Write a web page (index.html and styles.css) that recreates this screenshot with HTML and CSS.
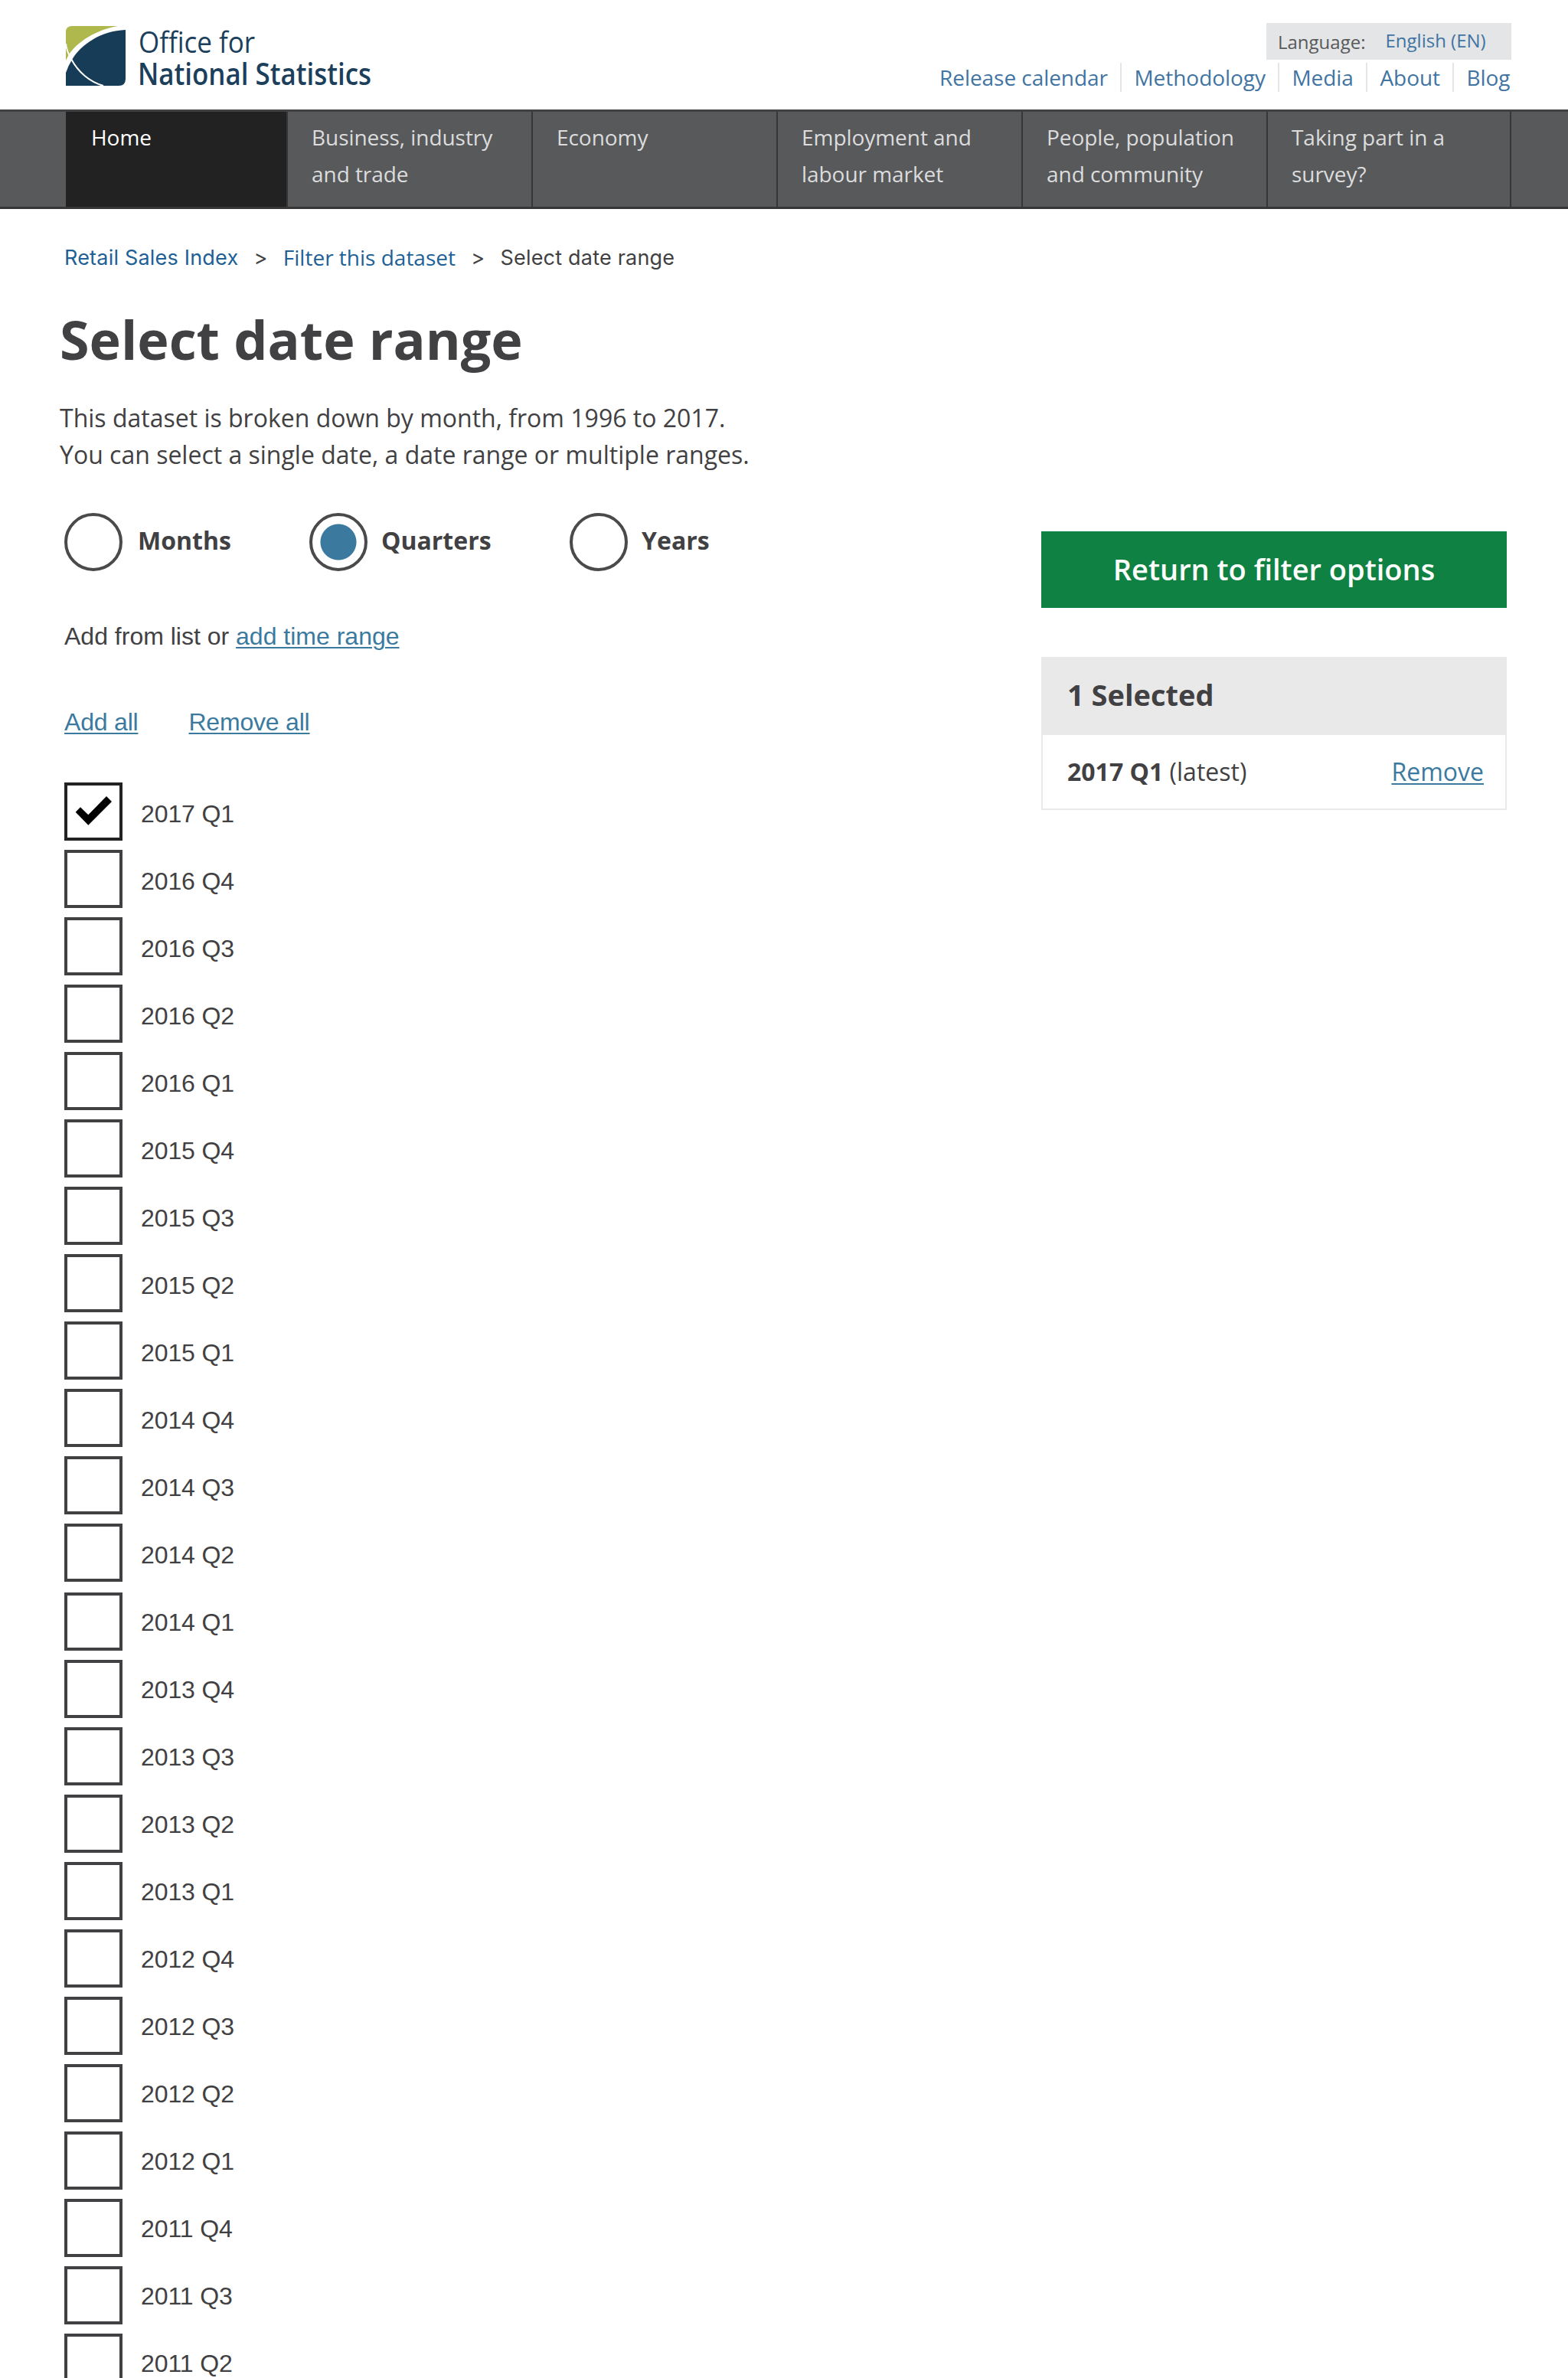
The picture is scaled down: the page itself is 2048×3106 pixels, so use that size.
FILE: index.html
```html
<!DOCTYPE html>
<html lang="en">
<head>
<meta charset="utf-8">
<title>Select date range</title>
<link rel="stylesheet" href="styles.css">
</head>
<body>
<header class="header">
  <svg class="logo" width="404" height="90" viewBox="0 0 404 90" role="img">
    <path class="logo-green" d="M8 0H68C40 5 17 19 4 37L0 45V8Q0 0 8 0Z"/>
    <path class="logo-navy" d="M0 78V61Q3 52 8 44C20 24 46 6 78 5V69Q78 78 69 78H0Z"/>
    <path class="logo-arc" d="M0 23Q1 33 7 43C16 60 31 73 49 78"/>
    <text class="logo-office" x="95" y="35" textLength="152" lengthAdjust="spacingAndGlyphs">Office for</text>
    <text class="logo-stats" x="94" y="77" textLength="305" lengthAdjust="spacingAndGlyphs">National Statistics</text>
  </svg>
  <div class="header-side">
    <div class="language"><span>Language:</span><a class="language-link">English (EN)</a></div>
    <nav class="links">
      <a>Release calendar</a><a>Methodology</a><a>Media</a><a>About</a><a>Blog</a>
    </nav>
  </div>
</header>
<nav class="nav">
  <a class="nav-item nav-home">Home</a>
  <a class="nav-item">Business, industry<br>and trade</a>
  <a class="nav-item">Economy</a>
  <a class="nav-item">Employment and<br>labour market</a>
  <a class="nav-item">People, population<br>and community</a>
  <a class="nav-item nav-last">Taking part in a<br>survey?</a>
</nav>
<div class="crumbs">
  <a>Retail Sales Index</a><span class="sep">&gt;</span><a class="crumb-filter">Filter this dataset</a><span class="sep">&gt;</span><span>Select date range</span>
</div>
<main class="main">
  <section class="content">
    <h1>Select date range</h1>
    <p class="intro">This dataset is broken down by month, from 1996 to 2017.<br>You can select a single date, a date range or multiple ranges.</p>
    <div class="radios">
      <label class="radio"><i class="ring"></i><span>Months</span></label>
      <label class="radio"><i class="ring ring-on"></i><span>Quarters</span></label>
      <label class="radio"><i class="ring"></i><span>Years</span></label>
    </div>
    <p class="mode">Add from list or <a>add time range</a></p>
    <p class="bulk"><a>Add all</a><a>Remove all</a></p>
    <ul class="list">
      <li><i class="box box-on"><svg width="68" height="68" viewBox="0 0 68 68"><path d="M10.700 34.700L17 28.300L27.300 38.300L51 14L58 21L27.300 51.700Z"/></svg></i><span>2017 Q1</span></li>
      <li><i class="box"></i><span>2016 Q4</span></li>
      <li><i class="box"></i><span>2016 Q3</span></li>
      <li><i class="box"></i><span>2016 Q2</span></li>
      <li><i class="box"></i><span>2016 Q1</span></li>
      <li><i class="box"></i><span>2015 Q4</span></li>
      <li><i class="box"></i><span>2015 Q3</span></li>
      <li><i class="box"></i><span>2015 Q2</span></li>
      <li><i class="box"></i><span>2015 Q1</span></li>
      <li><i class="box"></i><span>2014 Q4</span></li>
      <li><i class="box"></i><span>2014 Q3</span></li>
      <li><i class="box"></i><span>2014 Q2</span></li>
      <li><i class="box"></i><span>2014 Q1</span></li>
      <li><i class="box"></i><span>2013 Q4</span></li>
      <li><i class="box"></i><span>2013 Q3</span></li>
      <li><i class="box"></i><span>2013 Q2</span></li>
      <li><i class="box"></i><span>2013 Q1</span></li>
      <li><i class="box"></i><span>2012 Q4</span></li>
      <li><i class="box"></i><span>2012 Q3</span></li>
      <li><i class="box"></i><span>2012 Q2</span></li>
      <li><i class="box"></i><span>2012 Q1</span></li>
      <li><i class="box"></i><span>2011 Q4</span></li>
      <li><i class="box"></i><span>2011 Q3</span></li>
      <li><i class="box"></i><span>2011 Q2</span></li>
    </ul>
  </section>
  <aside class="side">
    <a class="button">Return to filter options</a>
    <div class="panel">
      <h2>1 Selected</h2>
      <div class="picked"><span><b>2017 Q1</b> (latest)</span><a>Remove</a></div>
    </div>
  </aside>
</main>
</body>
</html>
```
FILE: styles.css
```css
* { box-sizing: border-box; }
body { margin: 0; height: 3106px; overflow: hidden; background: #fff; color: #414042; font-family: "Open Sans", sans-serif; }
h1, h2, p, ul { margin: 0; padding: 0; }

.header { display: flex; justify-content: space-between; height: 143px; padding: 30px 74px 0 86px; }
.logo { margin-top: 4px; overflow: visible; }
.logo-green { fill: #afb84c; }
.logo-navy { fill: #173c57; }
.logo-arc { fill: none; stroke: #fff; stroke-width: 2; }
.logo-office, .logo-stats { font-family: "Open Sans", sans-serif; font-size: 39px; fill: #1c405b; }
.logo-stats { font-weight: 600; }
.header-side { display: flex; flex-direction: column; align-items: flex-end; gap: 4px; }
.language { display: flex; width: 320px; height: 48px; padding-left: 15px; background: #e4e5e6; color: #58595b; font-size: 24px; line-height: 49px; }
.language-link { margin-left: 26px; line-height: 46px; color: #4174a2; }
.links { display: flex; font-size: 28px; line-height: 38px; color: #4174a2; letter-spacing: -0.05px; }
.links a { padding: 0 16.5px 0 16px; border-right: 2px solid #e4e5e6; white-space: nowrap; }
.links a:last-child { padding-right: 1.5px; border: 0; }

.nav { display: flex; height: 130px; padding-left: 86px; background: #58595b; border-top: 3px solid #414042; border-bottom: 3px solid #363636; font-size: 28px; line-height: 48px; letter-spacing: -0.05px; color: #dcdcdd; }
.nav-item { width: 320px; padding: 9px 0 0 31px; border-right: 2px solid #363636; white-space: nowrap; }
.nav-home { width: 290px; background: #222; color: #fff; padding-left: 33px; }
.nav-last { width: 318px; }

.crumbs { display: flex; height: 48px; margin: 39px 0 0 84px; font-family: Inter, sans-serif; font-size: 27px; line-height: 49px; letter-spacing: 0.2px; color: #414042; }
.crumbs a { color: #206095; }
.sep { width: 58.5px; text-align: center; }
.crumbs .crumb-filter { font-family: "Open Sans", sans-serif; font-size: 28px; letter-spacing: 0; line-height: 48px; }

.main { display: flex; justify-content: space-between; padding: 34px 80px 0 84px; }
h1 { height: 96px; margin-left: -6px; font-size: 70px; line-height: 98px; }
.intro { margin: 32px 0 0 -6px; font-size: 32px; line-height: 48px; }
.radios { display: flex; margin-top: 52px; height: 76px; }
.radio { display: flex; width: 320px; font-size: 32px; font-weight: 700; line-height: 71px; }
.radio:nth-child(2) { width: 340px; }
.ring { width: 76px; height: 76px; margin-right: 18px; border: 4px solid #4a4a4b; border-radius: 50%; }
.radio:first-child .ring { margin-right: 20px; }
.ring-on { background: radial-gradient(circle, #3b7a9e 23px, #fff 24px); }

.mode, .bulk, .list { font-family: "Liberation Sans", sans-serif; font-size: 32px; line-height: 40px; }
.mode { margin-top: 65px; }
.bulk { display: flex; gap: 66px; margin-top: 72px; letter-spacing: -0.2px; }
.content a, .picked a { color: #3b7a9e; text-decoration: underline; text-decoration-thickness: 2px; text-underline-offset: 3px; }
.content .list { list-style: none; margin-top: 59px; line-height: 82px; letter-spacing: -0.1px; }
.list li { display: flex; height: 88px; }
.box { width: 76px; height: 76px; margin-right: 24px; border: 4px solid #414042; }
.box-on { border-color: #222; }
.list li:nth-child(n+13) .box { margin-top: 2px; }
.box svg { display: block; }

.side { width: 608px; padding-top: 300px; }
.button { display: block; height: 100px; background: #0f8243; color: #fff; text-align: center; font-size: 38px; font-weight: 600; line-height: 98px; }
.panel { margin-top: 64px; height: 200px; border: 2px solid #e9e9e9; }
h2 { height: 100px; padding-left: 32px; background: #e9e9e9; font-size: 38px; line-height: 95px; }
.picked { display: flex; justify-content: space-between; padding: 0 28px 0 32px; font-size: 32px; line-height: 96px; }
```
